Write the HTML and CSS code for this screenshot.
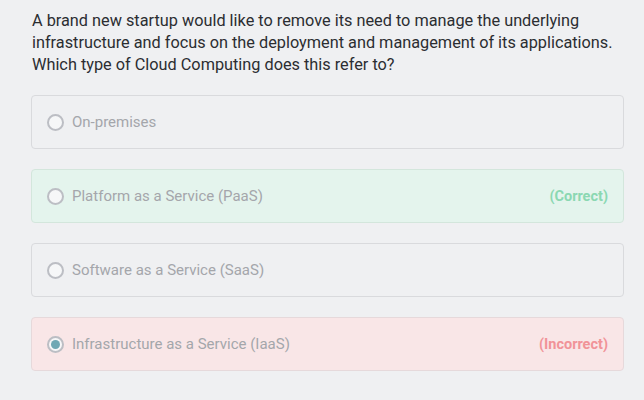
FILE: index.html
```html
<!DOCTYPE html>
<html>
<head>
<meta charset="utf-8">
<link rel="stylesheet" href="styles.css">
</head>
<body>
<div class="quiz">
  <p class="question">A brand new startup would like to remove its need to manage the underlying infrastructure and focus on the deployment and management of its applications. Which type of Cloud Computing does this refer to?</p>
  <div class="options">
    <div class="option">
      <span class="radio"></span>
      <span class="label">On-premises</span>
    </div>
    <div class="option correct">
      <span class="radio"></span>
      <span class="label">Platform as a Service (PaaS)</span>
      <span class="status">(Correct)</span>
    </div>
    <div class="option">
      <span class="radio"></span>
      <span class="label">Software as a Service (SaaS)</span>
    </div>
    <div class="option incorrect">
      <span class="radio checked"></span>
      <span class="label">Infrastructure as a Service (IaaS)</span>
      <span class="status">(Incorrect)</span>
    </div>
  </div>
</div>
</body>
</html>
```

FILE: styles.css
```css
html, body {
  margin: 0;
  padding: 0;
  background: #eff0f2;
}
body {
  font-family: "Roboto", "Liberation Sans", sans-serif;
}
.quiz {
  padding: 10px 20px 0 31px;
}
.question {
  margin: 0 0 19px 1px;
  font-size: 16.3px;
  line-height: 22px;
  color: #2b2d31;
}
.options {
  display: flex;
  flex-direction: column;
  gap: 20px;
}
.option {
  display: flex;
  align-items: center;
  height: 52px;
  padding: 0 15px;
  border: 1px solid #d9dadd;
  border-radius: 4px;
  background: #eff0f2;
}
.option.correct {
  background: #e4f4ed;
  border-color: #d3e6dc;
}
.option.incorrect {
  background: #f9e6e7;
  border-color: #e6d9db;
}
.radio {
  width: 13px;
  height: 13px;
  border: 2px solid #bcbec4;
  border-radius: 50%;
  background: #f6f7f8;
  flex: none;
  box-sizing: content-box;
  margin-right: 8px;
  position: relative;
}
.radio.checked::after {
  content: "";
  position: absolute;
  left: 2px;
  top: 2px;
  width: 9px;
  height: 9px;
  border-radius: 50%;
  background: #6fa8b4;
}
.label {
  flex: 1;
  font-size: 15px;
  color: #a4a6ab;
}
.status {
  font-size: 14.5px;
  font-weight: 700;
}
.correct .status {
  color: #8bd8b2;
}
.incorrect .status {
  color: #f19398;
}
```
